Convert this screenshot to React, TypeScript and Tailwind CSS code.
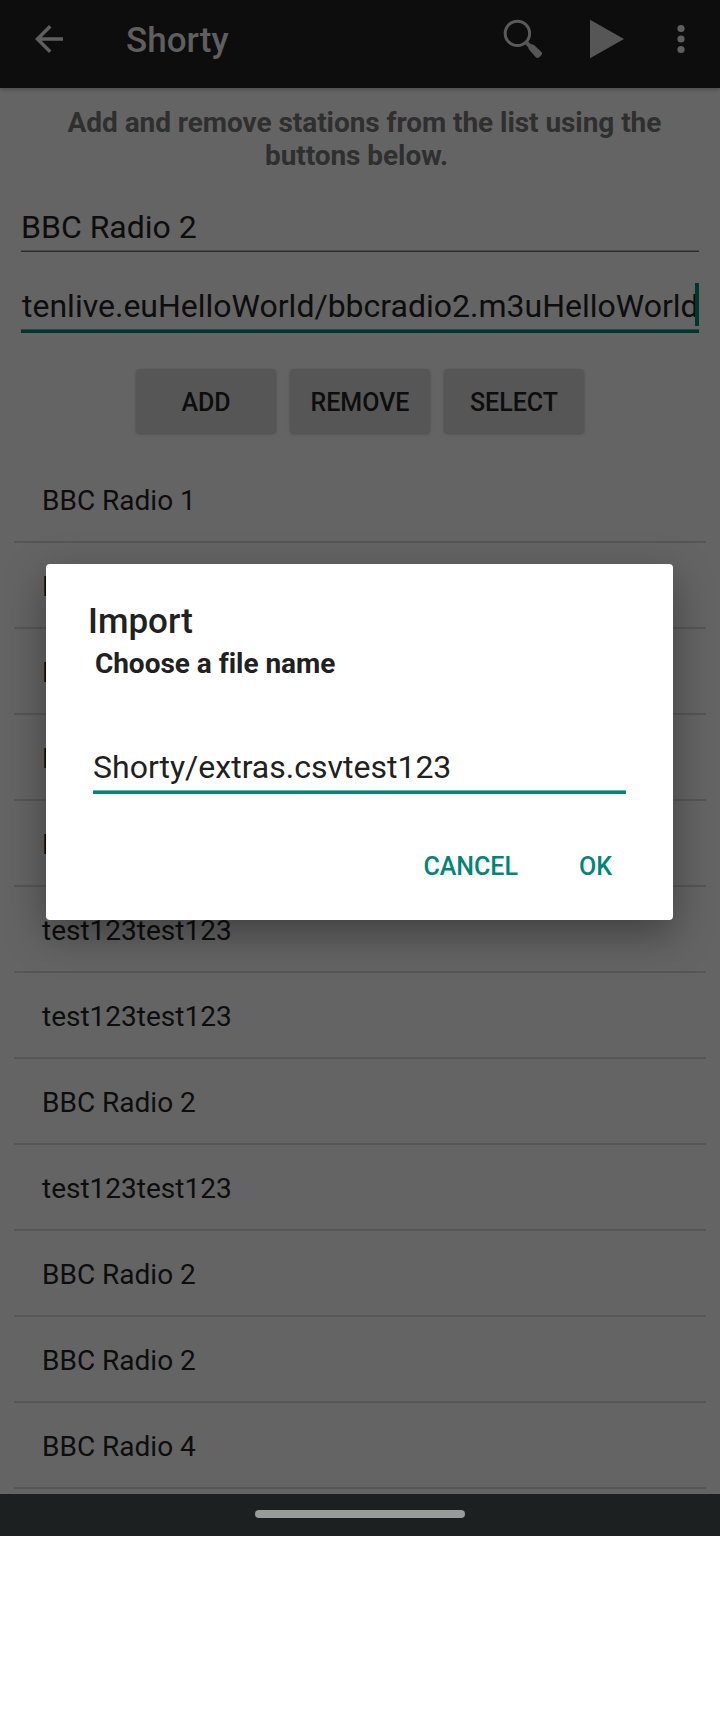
const stations = [
  'BBC Radio 1',
  'BBC Radio 1',
  'BBC Radio 2',
  'BBC Radio 3',
  'BBC Radio 4',
  'test123test123',
  'test123test123',
  'BBC Radio 2',
  'test123test123',
  'BBC Radio 2',
  'BBC Radio 2',
  'BBC Radio 4',
];

function AppBar() {
  return (
    <header className="relative z-10 flex h-[88px] items-start bg-[#0d0d0d] text-[#5f5f5f] shadow-[0_1px_4px_rgba(0,0,0,0.3)]">
      <svg className="mt-[18px] ml-[28px] size-[42px]" viewBox="0 0 24 24" fill="currentColor">
        <path d="M20 11H7.83l5.59-5.59L12 4l-8 8 8 8 1.41-1.41L7.83 13H20v-2z" />
      </svg>
      <h1 className="ml-[56px] h-[82px] flex-1 text-[35px] leading-[82px] font-medium">Shorty</h1>
      <svg className="mt-[18px] size-[42px] overflow-visible" viewBox="0 0 42 42" fill="none">
        <circle cx="19.4" cy="15.4" r="12.2" stroke="#5a5a5a" strokeWidth="3" />
        <path d="M28 24l4 4.4" stroke="#565656" strokeWidth="4" />
        <path
          d="M30.2 28.2L33 26l3 1 7.5 7Q44.8 35.5 43.5 37L41 39.5Q39.5 40.6 37.8 39.2L30.6 31Z"
          fill="#565656"
        />
      </svg>
      <svg className="mt-[18px] ml-[42px] size-[42px]" viewBox="0 0 42 42" fill="#565656">
        <path d="M8 1.7l34 19.3L8 40.3z" />
      </svg>
      <svg className="mt-[18px] mr-[18px] ml-[36px] size-[42px]" viewBox="0 0 42 42" fill="currentColor">
        <circle cx="21" cy="10.5" r="3.6" />
        <circle cx="21" cy="21" r="3.6" />
        <circle cx="21" cy="31.5" r="3.6" />
      </svg>
    </header>
  );
}

function RaisedButton({ label }: { label: string }) {
  return (
    <button className="h-[64px] w-[140px] rounded-[4px] bg-[#565656] text-[25px] leading-[67px] font-medium text-[#0d0d0d] shadow-[0_1px_3px_rgba(0,0,0,0.25)]">
      {label}
    </button>
  );
}

function ImportDialog() {
  return (
    <section className="absolute top-[564px] left-[46px] z-20 flex h-[356px] w-[627px] flex-col rounded-[4px] bg-white text-[#212121] shadow-[0_14px_40px_rgba(0,0,0,0.36)]">
      <h2 className="mt-[37px] ml-[42px] text-[35px] leading-[42px] font-medium">Import</h2>
      <p className="mt-[4px] ml-[42px] text-[28px] leading-[33px] font-bold tracking-[-0.03px] whitespace-pre"> Choose a file name</p>
      <div className="mx-[47px] mt-[65px] flex h-[49px] flex-col border-b-[3px] border-[#008577]">
        <span className="h-[45px] text-[32px] leading-[44px]">Shorty/extras.csvtest123</span>
        <span className="h-px bg-[#66b6ad]" />
      </div>
      <div className="mt-[41px] flex h-[63px] justify-end pr-[61px] text-[25px] leading-[64px] font-medium text-[#008577]">
        <button className="mr-[61px]">CANCEL</button>
        <button>OK</button>
      </div>
    </section>
  );
}

export default function App() {
  return (
    <div className="h-[1712px] w-[720px] bg-white font-['Roboto',sans-serif]">
      <div className="relative flex h-[1536px] flex-col overflow-hidden bg-[#646464] text-[#0d0d0d]">
        <AppBar />
        <p className="mt-[18px] text-center text-[28px] leading-[33px] font-bold tracking-[-0.06px] whitespace-pre text-[#2f2f2f]">
          <span className="block pl-[2px]"> Add and remove stations from the list using the</span>
          <span className="block pr-[7px]">buttons below.</span>
        </p>
        <div className="mx-[21px] mt-[33px] h-[47px] border-b border-[#2d2d2d]">
          <span className="block h-[45px] text-[32px] leading-[44px]">BBC Radio 2</span>
          <span className="block h-px bg-[#494949]" />
        </div>
        <div className="relative mx-[21px] mt-[32px] h-[49px] border-b-[3px] border-[#003530]">
          <span className="block h-[45px] pl-px text-[32px] leading-[44px] whitespace-nowrap">
            tenlive.euHelloWorld/bbcradio2.m3uHelloWorld
          </span>
          <span className="block h-px bg-[#284843]" />
          <span className="absolute -top-px right-0 h-[43px] w-1 bg-[#003530]" />
        </div>
        <div className="mt-[36px] flex justify-center gap-[14px]">
          <RaisedButton label="ADD" />
          <RaisedButton label="REMOVE" />
          <RaisedButton label="SELECT" />
        </div>
        <ul className="mx-[14px] mt-[24px] flex-1">
          {stations.map((name, i) => (
            <li key={i} className="h-[86px] border-b-2 border-[#565656] pt-[2px] pl-[28px] text-[28px] leading-[84px]">
              {name}
            </li>
          ))}
        </ul>
        <ImportDialog />
        <nav className="flex h-[42px] shrink-0 justify-center bg-[#1c2020] pt-[16px]">
          <span className="h-[8px] w-[210px] rounded-full bg-[#979b99]" />
        </nav>
      </div>
    </div>
  );
}
